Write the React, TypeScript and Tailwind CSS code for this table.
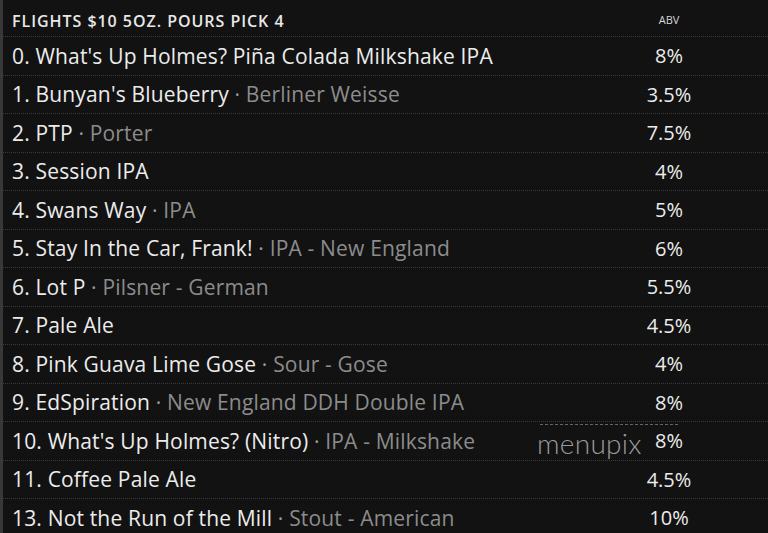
const beers: { name: string; style?: string; abv: string }[] = [
  { name: "0. What's Up Holmes? Piña Colada Milkshake IPA", abv: "8%" },
  { name: "1. Bunyan's Blueberry", style: "Berliner Weisse", abv: "3.5%" },
  { name: "2. PTP", style: "Porter", abv: "7.5%" },
  { name: "3. Session IPA", abv: "4%" },
  { name: "4. Swans Way", style: "IPA", abv: "5%" },
  { name: "5. Stay In the Car, Frank!", style: "IPA - New England", abv: "6%" },
  { name: "6. Lot P", style: "Pilsner - German", abv: "5.5%" },
  { name: "7. Pale Ale", abv: "4.5%" },
  { name: "8. Pink Guava Lime Gose", style: "Sour - Gose", abv: "4%" },
  { name: "9. EdSpiration", style: "New England DDH Double IPA", abv: "8%" },
  { name: "10. What's Up Holmes? (Nitro)", style: "IPA - Milkshake", abv: "8%" },
  { name: "11. Coffee Pale Ale", abv: "4.5%" },
  { name: "13. Not the Run of the Mill", style: "Stout - American", abv: "10%" },
];

export default function App() {
  return (
    <div
      className="relative h-[533px] w-[768px] overflow-hidden border-l-[3px] border-[#383838] bg-[#121212] text-[#ececec]"
      style={{ fontFamily: '"Open Sans", "Noto Sans", sans-serif' }}
    >
      <div className="flex h-[37px] items-center border-b border-dotted border-[#3a3a3a] pl-[9px] pt-[5px]">
        <div className="flex-1 text-[16px] font-semibold tracking-[0.06em] text-[#e8e8e8]">
          FLIGHTS $10 5OZ. POURS PICK 4
        </div>
        <div className="mr-[49px] w-[100px] text-center text-[11px] text-[#d8d8d8]">ABV</div>
      </div>

      {beers.map((b) => (
        <div
          key={b.name}
          className="flex h-[38.5px] items-center border-b border-dotted border-[#3a3a3a] pl-[9px] pt-[1px]"
        >
          <div className="flex-1 truncate text-[21px] tracking-[0.008em]">
            {b.name}
            {b.style && (
              <span className="text-[#8c8c8c]">
                <span className="text-[#9a9a9a]"> · </span>
                {b.style}
              </span>
            )}
          </div>
          <div className="mr-[49px] w-[100px] text-center text-[20px]">{b.abv}</div>
        </div>
      ))}

      <div className="absolute left-[537px] top-[424px] w-[138px] border-t border-dashed border-[#666]" />
      <div
        className="absolute left-[534px] top-[429px] text-[28px] font-light leading-none tracking-[0.01em] text-[#9a9a9a]"
        style={{ fontFamily: '"Lato", sans-serif' }}
      >
        menupix
      </div>
    </div>
  );
}
